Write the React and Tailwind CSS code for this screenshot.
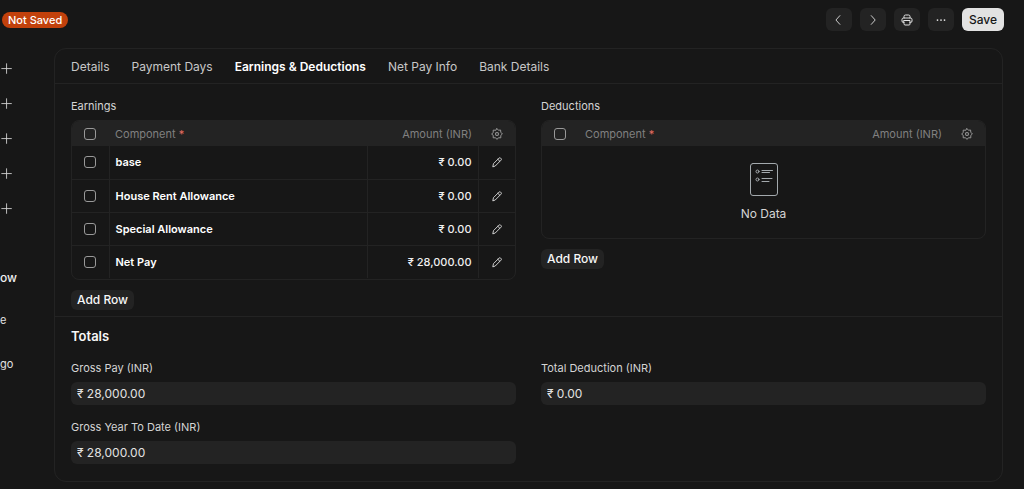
import { useState } from "react";

const tabs = ["Details", "Payment Days", "Earnings & Deductions", "Net Pay Info", "Bank Details"];

const earnings = [
  { component: "base", amount: "₹ 0.00" },
  { component: "House Rent Allowance", amount: "₹ 0.00" },
  { component: "Special Allowance", amount: "₹ 0.00" },
  { component: "Net Pay", amount: "₹ 28,000.00" },
];

const sidebarActions = ["Assign", "Attach", "Tag", "Share", "Follow"];

function Icon({ children, className = "size-4", viewBox = "0 0 16 16" }) {
  return (
    <svg
      viewBox={viewBox}
      className={className}
      fill="none"
      stroke="currentColor"
      strokeLinecap="round"
      strokeLinejoin="round"
      aria-hidden="true"
    >
      {children}
    </svg>
  );
}

function PrinterIcon() {
  return (
    <Icon className="size-3" viewBox="0 0 12 12">
      <path d="M3 4V2.500a1.500 1.500 0 0 1 1.500-1.500h3A1.500 1.500 0 0 1 9 2.500V4" />
      <path d="M3 8.500h-.5a1.500 1.500 0 0 1-1.500-1.500V5.500A1.500 1.500 0 0 1 2.500 4h7A1.500 1.500 0 0 1 11 5.500V7a1.500 1.500 0 0 1-1.500 1.500H9" />
      <path d="M3 6.500h6V10a1 1 0 0 1-1 1H4a1 1 0 0 1-1-1z" />
    </Icon>
  );
}

function GearIcon() {
  return (
    <Icon className="size-3">
      <path
        strokeWidth="1.3"
        d="M8 .8l1.900 2.200 2.900-.3.200 2.900L15.200 8 13 9.900l.1 3.200-3.200-.1L8 15.200 6.100 13l-3.200.1.100-3.200L.8 8 3 6.100l-.1-3.200 3.200.1z"
      />
      <circle cx="8" cy="8" r="2" strokeWidth="1.4" />
    </Icon>
  );
}

function PencilIcon() {
  return (
    <Icon className="size-3">
      <path
        strokeWidth="1.2"
        d="M2.500 14l.8-3.800 7.400-7.400a1.500 1.500 0 0 1 2.100 0l.6.600a1.500 1.500 0 0 1 0 2.100L6 13z"
      />
      <path strokeWidth="1.2" d="M9.200 4.500l2.500 2.500" />
    </Icon>
  );
}

function EmptyListIcon() {
  return (
    <Icon className="h-[33px] w-7" viewBox="0 0 28 33">
      <rect x="0.500" y="0.500" width="27" height="32" rx="2.500" />
      <circle cx="7.500" cy="8.500" r="1.500" />
      <circle cx="7.500" cy="16.500" r="1.500" />
      <path d="M12 7.500h10.500M12 9.500h7.500M12 15.500h10M12 18.500h7" />
    </Icon>
  );
}

function Checkbox({ label }) {
  return (
    <input
      type="checkbox"
      aria-label={label}
      className="block size-3 appearance-none rounded-[3px] border border-[#999999] checked:bg-[#e2e2e2]"
    />
  );
}

function IconButton({ label, children }) {
  return (
    <button aria-label={label} className="flex h-[23px] w-[26px] items-center justify-center rounded-md bg-[#232323] text-[#e2e2e2]">
      {children}
    </button>
  );
}

function ChildTable({ title, rows }) {
  return (
    <section>
      <h3 className="text-[11px] leading-4 text-[#d4d4d4]">{title}</h3>
      <div className="mt-1.5 overflow-hidden rounded-lg border border-[#232323] pb-px">
        <table aria-label={title} className="w-full table-fixed border-collapse text-[11px] leading-4">
          <colgroup>
            <col className="w-[37px]" />
            <col />
            <col className="w-[111px]" />
            <col className="w-[37px]" />
          </colgroup>
          <thead className="bg-[#232323] text-[#808080]">
            <tr className="h-[25px]">
              <th className="pl-3">
                <Checkbox label={`Select all ${title}`} />
              </th>
              <th className="px-1.5 text-left font-normal">
                Component <span className="text-[#e86c60]">*</span>
              </th>
              <th className="px-1.5 text-right font-normal">Amount (INR)</th>
              <th>
                <button aria-label="Configure columns" className="flex w-full justify-center text-[#999999]">
                  <GearIcon />
                </button>
              </th>
            </tr>
          </thead>
          <tbody>
            {rows.map((row, i) => (
              <tr key={row.component} className={`h-[33px] ${i > 0 ? "border-t border-[#232323]" : ""}`}>
                <td className="border-r border-[#232323] pl-3">
                  <Checkbox label={`Select ${row.component}`} />
                </td>
                <td className="px-1.5 font-semibold text-white">{row.component}</td>
                <td className="border-x border-[#232323] px-1.5 text-right font-medium text-[#f0f0f0]">{row.amount}</td>
                <td>
                  <button aria-label={`Edit ${row.component}`} className="flex w-full justify-center text-[#e2e2e2]">
                    <PencilIcon />
                  </button>
                </td>
              </tr>
            ))}
            {!rows.length && (
              <tr className="h-[91px]">
                <td colSpan={4} className="text-[#d4d4d4]">
                  <div className="flex flex-col items-center gap-2.5 pt-px">
                    <span className="text-[#a3a9ad]">
                      <EmptyListIcon />
                    </span>
                    <span className="text-xs">No Data</span>
                  </div>
                </td>
              </tr>
            )}
          </tbody>
        </table>
      </div>
      <button className="mt-2.5 h-5 rounded-md bg-[#232323] px-1.5 text-xs font-medium text-[#f8f8f8]">Add Row</button>
    </section>
  );
}

function CurrencyField({ id, label, value }) {
  return (
    <div>
      <label htmlFor={id} className="block text-[11px] leading-4 text-[#d4d4d4]">
        {label}
      </label>
      <input
        id={id}
        readOnly
        defaultValue={value}
        className="mt-1.5 block h-[23px] w-full rounded-md bg-[#232323] px-1.5 text-xs text-[#e2e2e2]"
      />
    </div>
  );
}

export default function App() {
  const [activeTab, setActiveTab] = useState("Earnings & Deductions");

  return (
    <div className="min-h-screen bg-[#171717] pb-2 font-['Inter',sans-serif] text-[#e2e2e2]">
      <header className="flex items-center justify-between pt-2 pr-5 pl-0.5">
        <span className="rounded-full bg-[#c2410c] px-1.5 text-[11px] leading-4 font-medium text-white">Not Saved</span>
        <div className="flex items-center gap-2">
          <IconButton label="Previous">
            <Icon className="size-3.5">
              <path d="M9 3L4.500 8 9 13" />
            </Icon>
          </IconButton>
          <IconButton label="Next">
            <Icon className="size-3.5">
              <path d="M6 3l4.500 5L6 13" />
            </Icon>
          </IconButton>
          <IconButton label="Print">
            <PrinterIcon />
          </IconButton>
          <IconButton label="More">
            <Icon className="size-3.5">
              <path d="M4 8h.01M8 8h.01M12 8h.01" strokeWidth="2" />
            </Icon>
          </IconButton>
          <button className="h-[23px] rounded-md bg-[#e2e2e2] px-[7px] text-xs font-medium text-[#171717]">Save</button>
        </div>
      </header>

      <div className="mt-[17px] flex pr-[21px]">
        <aside className="w-[54px] shrink-0 overflow-hidden pt-3.5">
          <div className="flex flex-col gap-[21px]">
            {sidebarActions.map((action) => (
              <button key={action} aria-label={action} className="flex h-3.5 w-3.5 items-center text-[#d4d4d4]">
                <Icon className="size-3.5">
                  <path d="M7.500 2v11M2 7.500h11" />
                </Icon>
              </button>
            ))}
          </div>
          <p className="mt-[54px] text-xs leading-4 font-medium text-[#f0f0f0]">ow</p>
          <p className="mt-[26px] text-[11px] leading-4">e</p>
          <p className="mt-7 text-[11px] leading-4">go</p>
        </aside>

        <main className="min-w-0 flex-1 rounded-xl border border-[#232323]">
          <nav role="tablist" className="flex h-[35px] items-center gap-[22px] border-b border-[#232323] px-4 pt-0.5">
            {tabs.map((tab) => (
              <button
                key={tab}
                role="tab"
                aria-selected={tab === activeTab}
                onClick={() => setActiveTab(tab)}
                className={`text-xs whitespace-nowrap ${tab === activeTab ? "font-semibold text-white" : "text-[#c7c7c7]"}`}
              >
                {tab}
              </button>
            ))}
          </nav>

          <div className="grid grid-cols-2 gap-[25px] border-b border-[#232323] px-4 pt-3.5 pb-1.5">
            <ChildTable title="Earnings" rows={earnings} />
            <ChildTable title="Deductions" rows={[]} />
          </div>

          <section className="px-4 pt-[9px] pb-[17px]">
            <h2 className="text-[13px] leading-5 font-semibold text-[#f8f8f8]">Totals</h2>
            <div className="mt-3.5 grid grid-cols-2 gap-x-[25px] gap-y-3.5">
              <CurrencyField id="gross-pay" label="Gross Pay (INR)" value="₹ 28,000.00" />
              <CurrencyField id="total-deduction" label="Total Deduction (INR)" value="₹ 0.00" />
              <CurrencyField id="gross-ytd" label="Gross Year To Date (INR)" value="₹ 28,000.00" />
            </div>
          </section>
        </main>
      </div>
    </div>
  );
}
